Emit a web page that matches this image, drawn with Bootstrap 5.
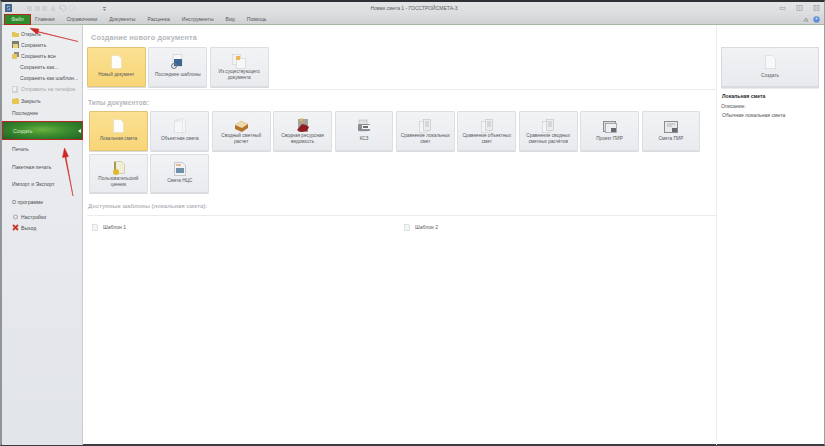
<!DOCTYPE html>
<html lang="ru">
<head>
<meta charset="UTF-8" />
<title>Новая смета 1 - ГОССТРОЙСМЕТА-3</title>
<link href="https://cdn.jsdelivr.net/npm/bootstrap@5.3.0/dist/css/bootstrap.min.css" rel="stylesheet" />
<style>
  html, body { height: 100%; }
  body { width: 825px; height: 446px; overflow: hidden; background: #fff; font-family: "Liberation Sans", Arial, sans-serif; font-size: 5.1px; line-height: 1.2; color: #4f5257; }
  .app-win { position: relative; width: 825px; height: 446px; border-top: 2px solid #2e3236; border-bottom: 2px solid #3a3e42; border-left: 2px solid #8f9599; border-right: 1px solid #9aa0a4; }
  .title-row { height: 12px; background: linear-gradient(#e4e5e7, #dcdddf); }
  .title-text { width: 825px; left: 0; top: 3px; text-align: center; color: #5c5f63; font-size: 5px; padding-right: 1px; }
  .qa-tools { padding-left: 3px; }
  .qa-first { margin-left: 15px; }
  .qa-last { margin-left: 25px; }
  .win-btns { gap: 9px; padding-right: 3px; }
  .tab-row { height: 11px; background: linear-gradient(#dcdddf, #cfd1d3); border-bottom: 1px solid #a7b8a0; }
  .tab-item { color: #55585e; white-space: nowrap; }
  .tab-file { width: 27px; height: 11px; margin-left: 2px; margin-right: 4px; background: #2f8a2c; border: 1px solid #b5281e; color: #dff0d8; text-align: center; line-height: 9px; }
  .tabs-list { gap: 12px; }
  .work-row { height: 420px; }
  .side-col { width: 81px; background: linear-gradient(#eceef0, #e2e5e9); border-right: 1px solid #c9ccd0; padding-top: 3px; flex: none; }
  .side-item { height: 11.2px; padding-left: 10px; gap: 2px; color: #4b4e52; white-space: nowrap; }
  .side-item.indent { padding-left: 18px; }
  .side-item.off { color: #a4a7ab; }
  .side-big { padding-left: 10px; color: #4b4e52; height: 17.7px; }
  .side-recent { height: 13px; margin-bottom: 1.5px; }
  .side-active { height: 19.5px; width: 81px; padding-left: 10px; color: #d8e8cf; border: 1.5px solid #b8261c; background: radial-gradient(ellipse at 50% 45%, #6bb23f 0%, #3f8f2f 40%, #1c6326 100%); }
  .side-active::after { content: ""; margin-left: auto; margin-right: 1px; border: 2.5px solid transparent; border-right: 3px solid #fff; border-left: 0; }
  .main-col { width: 634px; flex: none; padding: 8px 0 0 4px; border-right: 1px solid #eceded; }
  .sec-title { color: #b4b7bb; font-weight: 700; font-size: 7.3px; line-height: 9px; letter-spacing: .15px; margin: 0 0 5px 4px; }
  .sec-types { color: #b4b7bb; font-weight: 700; font-size: 6.5px; line-height: 8px; letter-spacing: .1px; margin: 9px 0 4px 1px; }
  .sec-avail { color: #b4b7bb; font-weight: 700; font-size: 5.9px; line-height: 8px; margin: 9px 0 5px 1px; }
  .tile-wrap { display: flex; flex-wrap: wrap; gap: 3px 2.6px; }
  .tile-types { margin-left: 2px; }
  .doc-tile { width: 58.8px; height: 39.5px; border: 1px solid #dcdee1; border-radius: 1px; background: linear-gradient(#f2f3f5, #e9ebef); color: #55585d; text-align: center; display: flex; flex-direction: column; align-items: center; box-shadow: 0 1px 0 #d9dbde; font-size: 4.7px; white-space: nowrap; }
  .doc-tile.on { background: linear-gradient(#fbe093, #f8d678); border-color: #e2c474; }
  .tile-icon { height: 21px; display: flex; align-items: flex-end; flex: none; }
  .tile-label { flex: 1; display: flex; align-items: center; justify-content: center; line-height: 6px; padding-bottom: 5px; }
  .sep-line { height: 1px; background: #eaebec; }
  .sep-first { margin-top: 2.5px; }
  .tpl-row { padding-left: 5px; margin-top: 7.5px; color: #5a5d61; }
  .tpl-one { width: 314px; }
  .tpl-one span { margin-left: 5px; }
  .right-col { flex: 1; padding: 7px 6px 0 4px; }
  .create-btn { width: 98px; height: 40px; margin-top: 15px; border: 1px solid #d8dade; background: linear-gradient(#f1f2f4, #e8eaee); text-align: center; color: #595c60; box-shadow: 0 1px 0 #d9dbde; font-size: 4.7px; }
  .right-sep { margin-top: 1px; }
  .right-name { margin: 4px 0 0 1px; color: #26282b; }
  .right-desc { margin-top: 4px; }
  .right-text { margin: 3px 0 0 1px; }
  .arrow-layer { position: absolute; left: -2px; top: -2px; pointer-events: none; }
</style>
</head>
<body>
<div class="app-win">
  <div class="title-row d-flex align-items-center justify-content-between position-relative">
    <div class="qa-tools d-flex align-items-center">
      <svg width="7" height="8" viewBox="0 0 7 8"><rect width="7" height="8" fill="#45698f"/><path d="M2 2h3v1H3v1h2v2H2V5h2V4H2z" fill="#8fa9c2"/></svg>
      <svg width="50" height="7" viewBox="0 0 50 7" class="qa-first"><g fill="#d0d2d5"><rect x="0" y="1" width="5" height="5"/><rect x="8" y="1" width="5" height="5"/><rect x="15" y="1" width="5" height="5"/><path d="M23 6l3-6 3 6z"/></g><path d="M33 4a3 3 0 1 1 2 2M33 1v3h3" fill="none" stroke="#c4c6ca"/><path d="M48 4a3 3 0 1 0-2 2M48 1v3h-3" fill="none" stroke="#d3d5d8"/></svg>
      <svg width="5" height="5" viewBox="0 0 5 5" class="qa-last"><path d="M1 1h3v1H1zM1 3l1.500 2L4 3z" fill="#85888c"/></svg>
    </div>
    <div class="title-text position-absolute">Новая смета 1 - ГОССТРОЙСМЕТА-3</div>
    <div class="win-btns d-flex align-items-center position-relative">
      <svg width="8" height="6" viewBox="0 0 8 6"><rect x="1" y="2.500" width="5" height="2" fill="none" stroke="#a5a8ab" stroke-width=".7"/></svg>
      <svg width="8" height="6" viewBox="0 0 8 6"><rect x="1" y="0.500" width="5" height="5" fill="none" stroke="#9da0a4" stroke-width=".7"/><path d="M1 3h5M3.500 .5v5" stroke="#b0b3b6" stroke-width=".5"/></svg>
      <svg width="8" height="6" viewBox="0 0 8 6"><rect x="1" y="0.500" width="5" height="5" fill="none" stroke="#9da0a4" stroke-width=".7"/><path d="M1 1l5 4M6 1L1 5" stroke="#9da0a4" stroke-width=".6"/></svg>
    </div>
  </div>
  <div class="tab-row d-flex align-items-center">
    <div class="tab-item tab-file">Файл</div>
    <div class="tabs-list d-flex flex-grow-1">
      <span class="tab-item">Главная</span>
      <span class="tab-item">Справочники</span>
      <span class="tab-item">Документы</span>
      <span class="tab-item">Расценка</span>
      <span class="tab-item">Инструменты</span>
      <span class="tab-item">Вид</span>
      <span class="tab-item">Помощь</span>
    </div>
    <svg width="6" height="5" viewBox="0 0 6 5" class="me-1"><path d="M1 4l2-3 2 3z" fill="none" stroke="#85888c" stroke-width=".7"/></svg>
    <svg width="7" height="7" viewBox="0 0 7 7" class="me-1"><circle cx="3.500" cy="3.500" r="3.200" fill="#5d8fd8"/><circle cx="3.500" cy="2.500" r="1" fill="#d9e6f8"/></svg>
  </div>
  <div class="work-row d-flex">
    <div class="side-col">
      <div class="side-item d-flex align-items-center"><svg width="7" height="6" viewBox="0 0 7 6"><path d="M0 1h3l1 1h3v4H0z" fill="#e6c557"/></svg>Открыть</div>
      <div class="side-item d-flex align-items-center"><svg width="7" height="7" viewBox="0 0 7 7"><rect width="7" height="7" fill="#7d7f6e"/><rect x="1" y="3" width="5" height="4" fill="#ecd27c"/></svg>Сохранить</div>
      <div class="side-item d-flex align-items-center"><svg width="7" height="7" viewBox="0 0 7 7"><rect x="2" width="5" height="5" fill="#8b8d80"/><rect y="2" width="5" height="5" fill="#e3c766"/></svg>Сохранить все</div>
      <div class="side-item indent d-flex align-items-center">Сохранить как...</div>
      <div class="side-item indent d-flex align-items-center">Сохранить как шаблон...</div>
      <div class="side-item off d-flex align-items-center"><svg width="7" height="7" viewBox="0 0 7 7"><rect width="6" height="7" fill="#d2d4d7"/><rect x="1" y="1" width="3" height="4" fill="#f0f1f2"/></svg>Отправить на телефон</div>
      <div class="side-item d-flex align-items-center"><svg width="7" height="6" viewBox="0 0 7 6"><path d="M0 1l5-1 2 1v5H0z" fill="#e6c557"/></svg>Закрыть</div>
      <div class="side-big side-recent d-flex align-items-center">Последние</div>
      <div class="side-active d-flex align-items-center">Создать</div>
      <div class="side-big d-flex align-items-center">Печать</div>
      <div class="side-big d-flex align-items-center">Пакетная печать</div>
      <div class="side-big d-flex align-items-center">Импорт и Экспорт</div>
      <div class="side-big d-flex align-items-center">О программе</div>
      <div class="side-item d-flex align-items-center"><svg width="7" height="6" viewBox="0 0 7 6"><circle cx="3.500" cy="3" r="2" fill="none" stroke="#a2a4a7" stroke-width="1"/></svg>Настройки</div>
      <div class="side-item d-flex align-items-center"><svg width="7" height="7" viewBox="0 0 7 7"><path d="M1 1l5 5M6 1L1 6" stroke="#c9372c" stroke-width="1.800"/></svg>Выход</div>
    </div>
    <div class="main-col">
      <div class="sec-title">Создание нового документа</div>
      <div class="tile-wrap">
        <div class="doc-tile on"><div class="tile-icon"><svg width="11" height="14" viewBox="0 0 11 14"><path d="M.5.5h7l3 3v10H.5z" fill="#fdfdfb" stroke="#e3dcc0" stroke-width=".6"/></svg></div><div class="tile-label">Новый документ</div></div>
        <div class="doc-tile"><div class="tile-icon"><svg width="13" height="15" viewBox="0 0 13 15"><rect x="2" y="0.500" width="9" height="12" fill="#f6f7f8" stroke="#c9ccd0" stroke-width=".6"/><rect x="3" y="5" width="8" height="7" fill="#3f6692"/><circle cx="3" cy="12" r="2.500" fill="none" stroke="#77797d"/></svg></div><div class="tile-label">Последние шаблоны</div></div>
        <div class="doc-tile"><div class="tile-icon"><svg width="14" height="15" viewBox="0 0 14 15"><rect x="0.500" y="0.500" width="8" height="10" fill="#f3f3f1" stroke="#cfd1d3" stroke-width=".6"/><rect x="4.500" y="4.500" width="9" height="10" fill="#f8f8f6" stroke="#cfd1d3" stroke-width=".6"/><rect x="4" y="2" width="4" height="4" fill="#eeb554"/></svg></div><div class="tile-label">Из существующего<br>документа</div></div>
      </div>
      <div class="sep-line sep-first"></div>
      <div class="sec-types">Типы документов:</div>
      <div class="tile-wrap tile-types">
        <div class="doc-tile on"><div class="tile-icon"><svg width="11" height="14" viewBox="0 0 11 14"><path d="M.5.5h7l3 3v10H.5z" fill="#fdfdfb" stroke="#e3dcc0" stroke-width=".6"/></svg></div><div class="tile-label">Локальная смета</div></div>
        <div class="doc-tile"><div class="tile-icon"><svg width="12" height="15" viewBox="0 0 12 15"><path d="M.5 3l8-2.500 3 2v12H.5z" fill="#f5f6f7" stroke="#d3d5d8" stroke-width=".6"/><path d="M.5 3h8v12" fill="none" stroke="#dcdee0" stroke-width=".6"/></svg></div><div class="tile-label">Объектная смета</div></div>
        <div class="doc-tile"><div class="tile-icon"><svg width="15" height="13" viewBox="0 0 15 13"><path d="M1 5l6-4 7 3v4l-6 4-7-3z" fill="#b6742a"/><path d="M1 5l6-4 7 3-6 4z" fill="#ecd9ae"/></svg></div><div class="tile-label">Сводный сметный<br>расчет</div></div>
        <div class="doc-tile"><div class="tile-icon"><svg width="14" height="15" viewBox="0 0 14 15"><rect x="2" y="1" width="10" height="13" fill="#a9a29c"/><path d="M1 12l5-6 4 1 3 2-2 4-6 1z" fill="#8f1d24"/><rect x="4" y="0.500" width="3" height="3" fill="#d8b356"/></svg></div><div class="tile-label">Сводная ресурсная<br>ведомость</div></div>
        <div class="doc-tile"><div class="tile-icon"><svg width="14" height="14" viewBox="0 0 14 14"><rect x="2" y="1" width="8" height="11" fill="#e0e2e4" stroke="#a8abae" stroke-width=".5"/><rect x="1" y="5" width="12" height="7" rx="1" fill="#8a8d91"/><rect x="5" y="6" width="8" height="4" fill="#f4f5f6"/><rect x="6" y="7" width="5" height="2" fill="#6a6d71"/></svg></div><div class="tile-label">КС3</div></div>
        <div class="doc-tile"><div class="tile-icon"><svg width="12" height="14" viewBox="0 0 12 14"><rect x="0.500" y="2.500" width="8" height="11" fill="#f3f4f5" stroke="#c9cbce" stroke-width=".6"/><rect x="4.500" y="0.500" width="7" height="11" fill="#ebecee" stroke="#bfc2c5" stroke-width=".6"/><path d="M6 3h4M6 5h4M6 7h4" stroke="#a5a8ab" stroke-width=".6"/></svg></div><div class="tile-label">Сравнение локальных<br>смет</div></div>
        <div class="doc-tile"><div class="tile-icon"><svg width="12" height="14" viewBox="0 0 12 14"><rect x="0.500" y="2.500" width="8" height="11" fill="#f3f4f5" stroke="#c9cbce" stroke-width=".6"/><rect x="4.500" y="0.500" width="7" height="11" fill="#ebecee" stroke="#bfc2c5" stroke-width=".6"/><path d="M6 3h4M6 5h4M6 7h4" stroke="#a5a8ab" stroke-width=".6"/></svg></div><div class="tile-label">Сравнение объектных<br>смет</div></div>
        <div class="doc-tile"><div class="tile-icon"><svg width="12" height="14" viewBox="0 0 12 14"><rect x="0.500" y="2.500" width="8" height="11" fill="#f3f4f5" stroke="#c9cbce" stroke-width=".6"/><rect x="4.500" y="0.500" width="7" height="11" fill="#ebecee" stroke="#bfc2c5" stroke-width=".6"/><path d="M6 3h4M6 5h4M6 7h4" stroke="#a5a8ab" stroke-width=".6"/></svg></div><div class="tile-label">Сравнение сводных<br>сметных расчётов</div></div>
        <div class="doc-tile"><div class="tile-icon"><svg width="14" height="12" viewBox="0 0 14 12"><rect x="0.500" y="0.500" width="12" height="10" fill="#d9dbdd" stroke="#8a8d91"/><rect x="2.500" y="2.500" width="11" height="9" fill="#eceef0" stroke="#909397" stroke-width=".7"/><rect x="8" y="7" width="5" height="4" fill="#66696d"/></svg></div><div class="tile-label">Проект ПИР</div></div>
        <div class="doc-tile"><div class="tile-icon"><svg width="14" height="12" viewBox="0 0 14 12"><rect x="0.500" y="0.500" width="13" height="11" fill="#e7e9eb" stroke="#8a8d91"/><path d="M3 3h8M3 5h5" stroke="#9a9da1" stroke-width=".7"/><rect x="8" y="7" width="5" height="4" fill="#66696d"/></svg></div><div class="tile-label">Смета ПИР</div></div>
        <div class="doc-tile"><div class="tile-icon"><svg width="13" height="15" viewBox="0 0 13 15"><path d="M2.500.5h7l3 3v9h-10z" fill="#f0edd9" stroke="#c4bb8c" stroke-width=".6"/><path d="M2 1h2v8H2z" fill="#a89752"/><circle cx="4" cy="11" r="3" fill="#e1b92d"/></svg></div><div class="tile-label">Пользовательский<br>ценник</div></div>
        <div class="doc-tile"><div class="tile-icon"><svg width="12" height="14" viewBox="0 0 12 14"><path d="M.5.5h8l3 3v10H.5z" fill="#f1f2f3" stroke="#a8abae" stroke-width=".6"/><rect x="2" y="6" width="8" height="5" fill="#6f8fa8"/><path d="M2 3h5" stroke="#d0813e"/></svg></div><div class="tile-label">Смета НЦС</div></div>
      </div>
      <div class="sec-avail">Доступные шаблоны (локальная смета):</div>
      <div class="sep-line"></div>
      <div class="tpl-row d-flex align-items-center">
        <div class="tpl-one d-flex align-items-center"><svg width="6" height="7" viewBox="0 0 6 7"><path d="M.3.3h4l1.400 1.400v5H.3z" fill="#f5f5f6" stroke="#c2c4c7" stroke-width=".6"/></svg><span>Шаблон 1</span></div>
        <div class="tpl-one d-flex align-items-center"><svg width="6" height="7" viewBox="0 0 6 7"><path d="M.3.3h4l1.400 1.400v5H.3z" fill="#f5f5f6" stroke="#c2c4c7" stroke-width=".6"/></svg><span>Шаблон 2</span></div>
      </div>
    </div>
    <div class="right-col">
      <div class="create-btn d-flex flex-column align-items-center justify-content-center">
        <svg width="11" height="14" viewBox="0 0 11 14" class="mb-1"><path d="M.5.5h7l3 3v10H.5z" fill="#f7f8f9" stroke="#d3d5d8" stroke-width=".6"/></svg>
        <span>Создать</span>
      </div>
      <div class="sep-line right-sep"></div>
      <div class="fw-bold right-name">Локальная смета</div>
      <div class="right-desc">Описание:</div>
      <div class="right-text">Обычная локальная смета</div>
    </div>
  </div>
  <svg class="arrow-layer" width="825" height="446" viewBox="0 0 825 446">
    <path d="M78 41.500L38 31.500l1-2.500-9-.8 7 6 1-2.200L78 41.500z" fill="#cf2420" stroke="#cf2420" stroke-width=".5"/>
    <path d="M73 196L66 157l2.500-.5L64.500 148l-2 9.500 2.500-.5z" fill="#cf2420" stroke="#cf2420" stroke-width=".5"/>
  </svg>
</div>
<script src="https://cdn.jsdelivr.net/npm/bootstrap@5.3.0/dist/js/bootstrap.bundle.min.js"></script>
</body>
</html>
